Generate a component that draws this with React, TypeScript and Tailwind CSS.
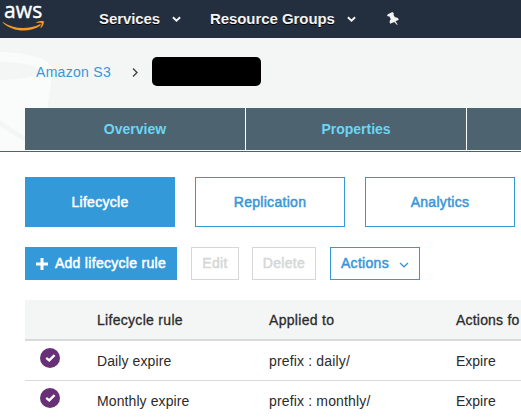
import type { ReactNode } from "react";

function Chevron({ className, width = 1.8 }: { className: string; width?: number }) {
  return (
    <svg className={className} viewBox="0 0 10 6" fill="none" stroke="currentColor" strokeWidth={width}>
      <path d="M1 1 5 4.8 9 1" />
    </svg>
  );
}

function AwsLogo() {
  return (
    <div className="relative h-[38px] w-[48px] shrink-0">
      <span className="absolute left-[4px] top-0 font-['Open_Sans',sans-serif] text-[21px] font-normal leading-[21px] tracking-[0.1px] text-white [-webkit-text-stroke:0.4px]">
        aws
      </span>
      <svg className="absolute left-0 top-[18px] h-[14px] w-[48px]" viewBox="0 0 48 14">
        <path d="M3.2 4.2C9 8 15.5 10 23 10c6 0 12-1.2 16.800-3.700.9-.4 1.500.5.7 1.100C36 10.700 29.600 12.500 23.500 12.500 15.500 12.500 8.500 9.600 3 4.900c-.5-.5-.2-1 .2-.7Z" fill="#f7981f" />
        <path d="M36.500 4.300C38.500 2.900 43 2.500 43.700 3.300c.7.9-.4 4.700-2.600 6.600-.4.300-.8.100-.6-.3.700-1.600 1.500-3.700 1.100-4.300-.5-.6-3.100-.5-4.700-.3-.6.100-.8-.4-.4-.7Z" fill="#f7981f" />
      </svg>
    </div>
  );
}

function PushPin() {
  return (
    <svg className="ml-[30px] mt-[-2px] h-[15px] w-[15px]" viewBox="0 0 15 15" fill="#f3f3f3">
      <path d="M1 4.200C1 3.200 6 .9 7 1.200L7.900 2.700 7.400 3.600 8.900 6.300C10.500 6.200 12.200 6.900 12.800 8.700L9.500 10.300 11.600 13.600 11.100 14 8.200 10.900 4.100 12.800C3.300 11.200 3.600 9.400 4.800 8.300L3.300 5.300 2 5.500Z" />
    </svg>
  );
}

function Check() {
  return (
    <div className="mt-[-6px] flex size-5 items-center justify-center rounded-full bg-[#673077]">
      <svg className="h-[8px] w-[11px]" viewBox="0 0 11 8" fill="none" stroke="white" strokeWidth="2.300">
        <path d="M1.200 3.900 4.200 6.400 9.600 1.200" />
      </svg>
    </div>
  );
}

function Tab({ children }: { children?: ReactNode }) {
  return (
    <div className="flex h-[42px] w-[220px] shrink-0 items-center justify-center bg-[#4d6470] text-[14px] font-bold text-[#6cd5f5]">
      {children}
    </div>
  );
}

const section =
  "flex h-[50px] w-[150px] shrink-0 items-center justify-center border border-[#3499d9] text-[14px] tracking-[0.3px] [-webkit-text-stroke:0.5px]";
const action =
  "flex h-[33px] shrink-0 items-center justify-center border text-[14px] tracking-[0.3px] [-webkit-text-stroke:0.5px]";
const columns = "ml-[25px] grid w-[560px] grid-cols-[72px_172px_187px_129px] items-center text-[14px] text-[#2b2b2b]";

function Rule({ name, prefix }: { name: string; prefix: string }) {
  return (
    <div className={`${columns} h-10 border-b border-[#d9dadb]`}>
      <div className="pl-[15px]">
        <Check />
      </div>
      <span className="pt-0.5 tracking-[0.1px]">{name}</span>
      <span className="pt-0.5 tracking-[0.16px]">{prefix}</span>
      <span className="pt-0.5">Expire</span>
    </div>
  );
}

export default function App() {
  return (
    <div className="h-[419px] w-[521px] overflow-hidden bg-white font-['Liberation_Sans',Arial,sans-serif]">
      <nav className="flex h-[38px] items-center bg-[#232f3e] text-[15px] font-bold text-[#f3f3f3]">
        <AwsLogo />
        <span className="ml-[51px] tracking-[-0.1px] [text-shadow:0_1px_0_#000]">Services</span>
        <Chevron className="ml-[12px] h-[6px] w-[9px]" width={2.2} />
        <span className="ml-[29px] tracking-[-0.06px] [text-shadow:0_1px_0_#000]">Resource Groups</span>
        <Chevron className="ml-[12px] h-[6px] w-[9px]" width={2.2} />
        <PushPin />
      </nav>
      <header className="relative h-[114px] border-b border-[#4d6470] bg-[#f4f6f5]">
        <svg className="absolute left-0 top-0 h-[113px] w-[60px]" viewBox="0 0 60 113">
          <path d="M0 14C24 14 53 21 53 32L41 113H0Z" fill="#fafcfb" />
          <path d="M0 24C22 24 42 29 42 33S22 42 0 42Z" fill="#f4f6f5" />
          <path d="M0 82 26 99V105L0 88Z" fill="#f4f6f5" />
        </svg>
        <div className="relative flex h-[70px] items-center pb-0.5 pl-[36px]">
          <span className="text-[14px] tracking-[0.3px] text-[#3896d8]">Amazon S3</span>
          <svg className="ml-[21px] h-[9px] w-[6px]" viewBox="0 0 6 9" fill="none" stroke="#444" strokeWidth="1.400">
            <path d="M1 .6 5 4.500 1 8.400" />
          </svg>
          <div className="mb-px ml-[14px] h-[29px] w-[109px] rounded-[5px] bg-black" />
        </div>
        <div className="relative ml-[25px] flex h-[43px] gap-px overflow-hidden border-b border-white bg-white">
          <Tab>Overview</Tab>
          <Tab>Properties</Tab>
          <Tab />
        </div>
      </header>
      <main>
        <div className="flex gap-5 pl-[25px] pt-[25px]">
          <div className={`${section} bg-[#3499d9] text-white`}>Lifecycle</div>
          <div className={`${section} text-[#3896d8]`}>Replication</div>
          <div className={`${section} text-[#3896d8]`}>Analytics</div>
        </div>
        <div className="mt-5 flex pl-[25px]">
          <div className={`${action} w-[152px] border-[#3499d9] bg-[#3499d9] text-white`}>
            <svg className="mr-[7px] mt-px size-[12px]" viewBox="0 0 12 12" fill="white">
              <path d="M4.500 0h3v4.500H12v3H7.500V12h-3V7.500H0v-3h4.500Z" />
            </svg>
            Add lifecycle rule
          </div>
          <div className={`${action} ml-[14px] w-[48px] border-[#d5d7d7] text-[#d5d7d7]`}>Edit</div>
          <div className={`${action} ml-[13px] w-[64px] border-[#d5d7d7] text-[#d5d7d7]`}>Delete</div>
          <div className={`${action} ml-[14px] w-[90px] border-[#3499d9] text-[#3896d8]`}>
            Actions
            <Chevron className="ml-[10px] mt-[3px] h-[6px] w-[10px]" width={1.3} />
          </div>
        </div>
        <div
          className={`${columns} mt-5 h-[41px] border-b-2 border-[#d9dadb] bg-[#f4f6f5] pt-px tracking-[0.3px] [-webkit-text-stroke:0.3px]`}
        >
          <span />
          <span>Lifecycle rule</span>
          <span>Applied to</span>
          <span className="tracking-[0.2px]">Actions fo</span>
        </div>
        <Rule name="Daily expire" prefix="prefix : daily/" />
        <Rule name="Monthly expire" prefix="prefix : monthly/" />
      </main>
    </div>
  );
}
